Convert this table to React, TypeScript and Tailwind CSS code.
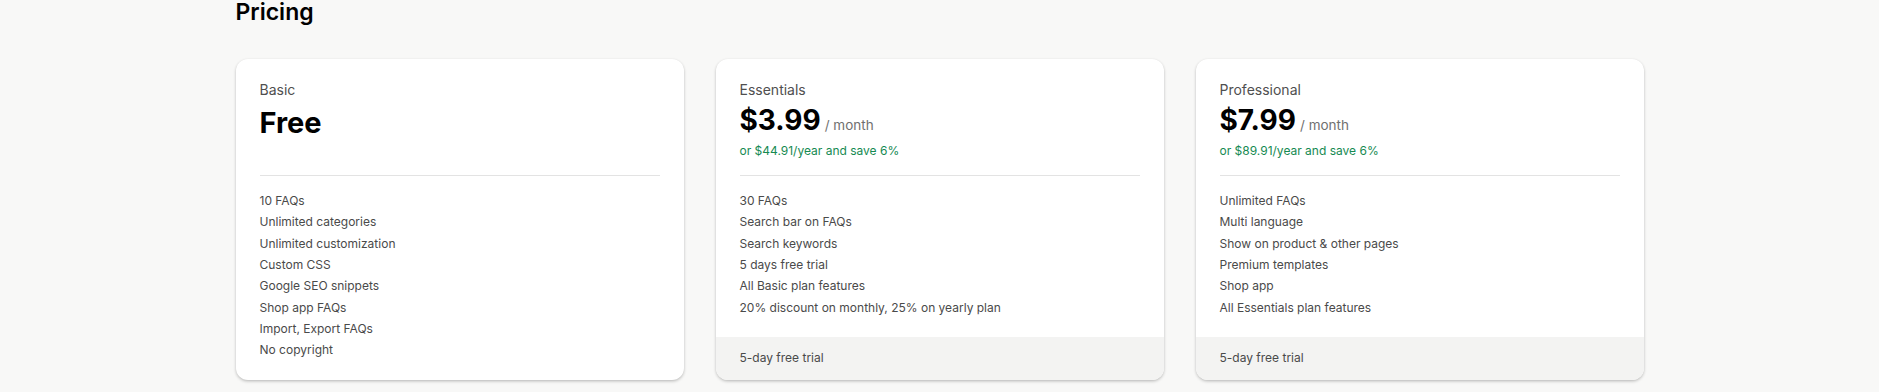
import React from "react";

type Plan = {
  name: string;
  price: string;
  period?: string;
  yearly?: string;
  features: string[];
  footer?: string;
};

const plans: Plan[] = [
  {
    name: "Basic",
    price: "Free",
    features: [
      "10 FAQs",
      "Unlimited categories",
      "Unlimited customization",
      "Custom CSS",
      "Google SEO snippets",
      "Shop app FAQs",
      "Import, Export FAQs",
      "No copyright",
    ],
  },
  {
    name: "Essentials",
    price: "$3.99",
    period: "/ month",
    yearly: "or $44.91/year and save 6%",
    features: [
      "30 FAQs",
      "Search bar on FAQs",
      "Search keywords",
      "5 days free trial",
      "All Basic plan features",
      "20% discount on monthly, 25% on yearly plan",
    ],
    footer: "5-day free trial",
  },
  {
    name: "Professional",
    price: "$7.99",
    period: "/ month",
    yearly: "or $89.91/year and save 6%",
    features: [
      "Unlimited FAQs",
      "Multi language",
      "Show on product & other pages",
      "Premium templates",
      "Shop app",
      "All Essentials plan features",
    ],
    footer: "5-day free trial",
  },
];

function PlanCard({ plan }: { plan: Plan }) {
  return (
    <div className="flex flex-col overflow-hidden rounded-xl bg-white shadow-[0_1px_3px_rgba(0,0,0,0.18),0_2px_4px_-1px_rgba(0,0,0,0.12)]">
      <div className="flex-1 px-6 pt-[21px] pb-[19px]">
        <div className="text-[14px] leading-5 text-[#4f4f4f]">{plan.name}</div>
        {plan.period ? (
          <div className="flex h-[40px] items-baseline">
            <span className="text-[28px] font-bold leading-[40px] text-black">{plan.price}</span>
            <span className="ml-1 text-[13.5px] leading-none text-[#707070]">{plan.period}</span>
          </div>
        ) : (
          <div className="flex h-[40px] items-baseline">
            <span className="relative top-[3px] text-[29px] font-bold leading-[40px] text-black">
              {plan.price}
            </span>
          </div>
        )}
        <div className="mt-px h-5 text-[12px] leading-5 text-[#168a52]">{plan.yearly ?? ""}</div>
        <div className="mt-[14px] h-px bg-[#e3e3e3]" />
        <ul className="mt-[14px] flex flex-col">
          {plan.features.map((f) => (
            <li key={f} className="text-[12px] leading-[21.33px] text-[#4a4a4a]">
              {f}
            </li>
          ))}
        </ul>
      </div>
      {plan.footer && (
        <div className="flex h-[43px] items-center bg-[#f3f3f2] px-6 text-[12px] leading-5 text-[#4a4a4a]">
          {plan.footer}
        </div>
      )}
    </div>
  );
}

export default function App() {
  return (
    <div
      className="min-h-[392px] w-full bg-[#f8f8f7]"
      style={{ fontFamily: "Inter, 'Noto Sans', sans-serif" }}
    >
      <div className="mx-auto w-[1408px]">
        <h1 className="text-[23px] font-semibold leading-6 text-black">Pricing</h1>
        <div className="mt-[35px] grid grid-cols-3 gap-8">
          {plans.map((p) => (
            <PlanCard key={p.name} plan={p} />
          ))}
        </div>
      </div>
    </div>
  );
}
